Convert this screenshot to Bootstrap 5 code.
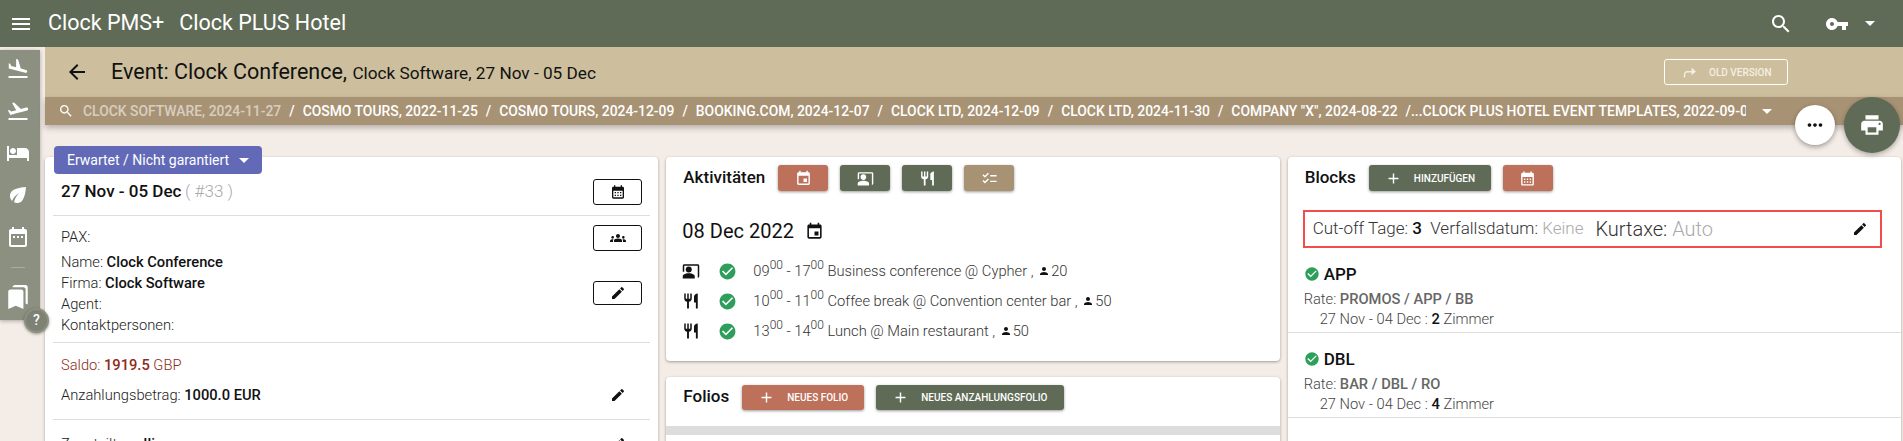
<!DOCTYPE html>
<html lang="de">
<head>
  <meta charset="UTF-8">
  <meta name="viewport" content="width=device-width, initial-scale=1">
  <title>Event: Clock Conference</title>
  <link href="https://cdn.jsdelivr.net/npm/bootstrap@5.3.3/dist/css/bootstrap.min.css" rel="stylesheet">
  <style>
    html, body { height: 441px; overflow: hidden; }
    body { background: #f4ece6; font-family: Roboto, "Liberation Sans", sans-serif; font-size: 14.7px; font-weight: 300; color: #212121; }
    svg.ic { width: 1em; height: 1em; fill: currentColor; flex: none; }
    .ic-24 { font-size: 24px; }
    .ic-16 { font-size: 16px; }
    .topbar { height: 47px; background: #5f6b57; color: #fff; font-size: 21.5px; font-weight: 400; padding: 0 28px 0 9px; }
    .topbar .brand-a { margin-left: 15px; }
    .topbar .brand-b { margin-left: 15px; }
    .top-tools { gap: 32px; }
    .side-wrap { width: 45px; flex: none; }
    .side-bar { width: 40px; height: 270px; margin-top: 3px; background: #8b9080; color: #fff; font-size: 24px; padding: 7px 5px 0 0; gap: 18px; box-shadow: 0 1px 4px rgba(0,0,0,.3); }
    .side-rule { width: 14px; height: 1px; background: #a9ad9f; margin-bottom: -2px; }
    .side-marks { font-size: 26px !important; }
    .help-dot { position: absolute; left: 24px; top: 308px; width: 25px; height: 25px; border-radius: 50%; background: #7d8274; color: #fff; font-size: 14px; font-weight: 500; box-shadow: 0 1px 3px rgba(0,0,0,.4); border: 2px solid #8b9080; }
    .title-bar { height: 50px; background: #cdbf9d; color: #111; padding: 0 115px 0 20px; }
    .title-bar h1 { font-size: 21.5px; font-weight: 400; margin: 0 0 0 22px; }
    .title-bar h1 span { font-size: 17.2px; }
    .btn-old { width: 124px; height: 26px; padding: 0 0 0 16px; border: 1px solid #fff; border-radius: 3px; background: transparent; color: #f4efe3; font-size: 10px; font-weight: 500; }
    .btn-old svg { font-size: 17px; margin-right: 11px; }
    .crumbs { height: 28px; background: #a89274; color: #fff; font-size: 13.9px; font-weight: 500; padding: 0 131px 0 13px; box-shadow: 0 3px 6px rgba(0,0,0,.25); white-space: nowrap; position: relative; }
    .crumbs .crumb-list { flex: 1; overflow: hidden; margin-left: 9px; }
    .crumbs .dim { opacity: .55; }
    .crumbs .sep { margin: 0 8px; }
    .crumbs .sep.tight { margin-right: 0; }
    .caret-d { width: 0; height: 0; border-left: 5px solid transparent; border-right: 5px solid transparent; border-top: 5px solid currentColor; display: inline-block; flex: none; }
    .fab-more { position: absolute; left: 1795px; top: 105px; width: 40px; height: 40px; border-radius: 50%; background: #fff; color: #111; font-size: 22px; box-shadow: 0 2px 5px rgba(0,0,0,.35); z-index: 5; }
    .fab-print { position: absolute; left: 1844px; top: 97px; width: 56px; height: 56px; border-radius: 50%; background: #5f6b57; color: #fff; font-size: 26px; box-shadow: 0 2px 5px rgba(0,0,0,.3); z-index: 5; }
    .cols { margin-top: 32px; padding-right: 2px; }
    .panel { display: flow-root; background: #fff; border: 0; border-radius: 4px; box-shadow: 0 1px 3px rgba(0,0,0,.35); }
    .btn-status { display: flex; align-items: center; width: 208px; height: 28px; margin: -11px 0 0 9px; padding: 0 0 0 13px; border: 0; border-radius: 4px; background: #626ab8; color: #fff; font-size: 14px; font-weight: 400; position: relative; }
    .btn-status .caret-d { margin-left: 10px; }
    .sect { margin: 0 8px; padding: 0 8px; border-bottom: 1px solid #ddd; }
    .sect-date { height: 42px; padding-top: 5px; }
    .sect-date b { font-size: 17px; font-weight: 500; color: #111; }
    .sect-date i { font-style: normal; font-size: 17px; color: #aaa; }
    .sect-info { height: 127px; padding-top: 9px; }
    .sect-info p { margin: 0; line-height: 21px; }
    .sect-info p:first-child { line-height: 24px; margin-bottom: 3px; }
    .sect-pay { height: 77px; padding-top: 7px; }
    .sect-pay > div { height: 30px; }
    .sect-last { padding-top: 13px; }
    .strong-t { font-weight: 500; color: #111; }
    .saldo { color: #8e2a20; }
    .saldo b { font-weight: 500; }
    .btn-line { width: 49px; height: 26px; padding: 0; border: 1px solid #111; border-radius: 3px; color: #111; font-size: 16px; background: #fff; }
    .btn-line.edit { height: 24px; margin-top: 30px; }
    .edit-ic { font-size: 16px; color: #111; margin-right: 16px; }
    .panel-head { padding: 8px 17px 0; height: 34px; }
    .panel-head h2 { font-size: 17px; font-weight: 500; margin: 0 13px 2px 0; color: #111; }
    .btn-act { height: 26px; padding: 0; border: 0; border-radius: 3px; color: #fff; box-shadow: 0 1px 3px rgba(0,0,0,.4); font-size: 10px; font-weight: 500; }
    .btn-act svg { font-size: 17px; }
    .btn-act.ico { width: 50px; }
    .btn-act .lead-ic { margin: 0 12px 0 16px; }
    .act-btns { gap: 12px; }
    .tone-red { background: #bd705a; }
    .tone-green { background: #5f6b57; }
    .tone-tan { background: #a89274; }
    .date-head { font-size: 20px; font-weight: 400; color: #111; margin: 25px 0 0 16px; line-height: 30px; }
    .date-head svg { font-size: 19px; margin-left: 11px; }
    .act-list { margin: 10px 16px 0; padding-bottom: 15px; }
    .act-row { height: 30px; color: #333; }
    .act-row .kind { font-size: 18px; color: #111; width: 36px; }
    .act-row .ok { font-size: 19px; color: #2e9e5b; width: 35px; }
    .act-row sup { font-size: 12px; top: -.55em; }
    .pers { font-size: 12px; color: #111; margin: 0 1px 0 1px; vertical-align: -1px; }
    .folios { margin-top: 16px; height: 80px; }
    .folio-head { padding: 8px 17px 0; height: 49px; }
    .folio-head h2 { font-size: 17px; font-weight: 500; margin: 0 13px 0 0; color: #111; line-height: 22px; }
    .btn-wide { height: 25px; padding: 0; }
    .folio-band { height: 9px; background: #ddd; }
    .cutoff { margin: 19px 19px 0 15px; height: 38px; padding: 0 12px 0 8px; border: 2px solid #f44b4b; color: #333; font-size: 17px; }
    .cutoff .big { font-size: 20px; margin-left: 12px; }
    .muted-t { color: #aaa; }
    .block-item { height: 85px; padding: 15px 16px 0; border-bottom: 1px solid #ddd; }
    .block-item h3 { font-size: 17px; font-weight: 500; margin: 0; line-height: 22px; color: #111; }
    .block-item h3 svg { font-size: 16px; color: #2e9e5b; margin-right: 4px; vertical-align: -2px; }
    .block-item p { margin: 0; line-height: 20px; color: #444; }
    .block-item p.rate { margin-top: 4px; }
    .block-item p.rate b { font-weight: 500; color: #666; }
    .block-item p.span-l { padding-left: 16px; }
    .block-item p.span-l b { font-weight: 500; color: #111; }
    .block-tail { height: 40px; }
  </style>
</head>
<body>
  <svg width="0" height="0" class="position-absolute">
    <symbol id="i-menu" viewBox="0 0 24 24"><path d="M3 18h18v-2H3v2zm0-5h18v-2H3v2zm0-7v2h18V6H3z"/></symbol>
    <symbol id="i-search" viewBox="0 0 24 24"><path d="M15.5 14h-.79l-.28-.27C15.41 12.59 16 11.11 16 9.5 16 5.91 13.09 3 9.5 3S3 5.91 3 9.5 5.91 16 9.5 16c1.61 0 3.09-.59 4.23-1.57l.27.28v.79l5 4.99L20.49 19l-4.99-5zm-6 0C7.01 14 5 11.99 5 9.5S7.01 5 9.5 5 14 7.01 14 9.5 11.99 14 9.5 14z"/></symbol>
    <symbol id="i-key" viewBox="0 0 24 24"><path d="M12.65 10C11.83 7.67 9.61 6 7 6c-3.31 0-6 2.69-6 6s2.69 6 6 6c2.61 0 4.83-1.67 5.65-4H17v4h4v-4h2v-4H12.65zM7 14c-1.1 0-2-.9-2-2s.9-2 2-2 2 .9 2 2-.9 2-2 2z"/></symbol>
    <symbol id="i-back" viewBox="0 0 24 24"><path d="M20 11H7.83l5.59-5.59L12 4l-8 8 8 8 1.41-1.41L7.83 13H20v-2z"/></symbol>
    <symbol id="i-land" viewBox="0 0 24 24"><path d="M2.5 19h19v2h-19zm16.84-3.15c.8.21 1.62-.26 1.84-1.06.21-.8-.26-1.62-1.06-1.84l-5.31-1.42-2.76-9.02L10.12 2v8.28L5.15 8.95l-.93-2.32-1.45-.39v5.17l16.57 4.44z"/></symbol>
    <symbol id="i-takeoff" viewBox="0 0 24 24"><path d="M2.5 19h19v2h-19zm19.57-9.36c-.21-.8-1.04-1.28-1.84-1.06L14.92 10l-6.9-6.43-1.93.51 4.14 7.17-4.97 1.33-1.97-1.54-1.45.39 1.82 3.16.77 1.33 1.6-.43 5.31-1.42 4.35-1.16L21 11.49c.81-.23 1.28-1.05 1.07-1.85z"/></symbol>
    <symbol id="i-hotel" viewBox="0 0 24 24"><path d="M7 13c1.66 0 3-1.34 3-3S8.66 7 7 7s-3 1.34-3 3 1.34 3 3 3zm12-6h-8v7H3V5H1v15h2v-3h18v3h2v-9c0-2.21-1.79-4-4-4z"/></symbol>
    <symbol id="i-leaf" viewBox="0 0 24 24"><path d="M6.05 8.05c-2.73 2.73-2.73 7.15-.02 9.88 1.47-3.4 4.09-6.24 7.36-7.93-2.77 2.34-4.71 5.61-5.39 9.32 2.6 1.23 5.8.78 7.95-1.37C19.43 14.47 20 4 20 4S9.53 4.57 6.05 8.05z"/></symbol>
    <symbol id="i-range" viewBox="0 0 24 24"><path d="M9 11H7v2h2v-2zm4 0h-2v2h2v-2zm4 0h-2v2h2v-2zm2-7h-1V2h-2v2H8V2H6v2H5c-1.11 0-1.99.9-1.99 2L3 20c0 1.1.89 2 2 2h14c1.1 0 2-.9 2-2V6c0-1.1-.9-2-2-2zm0 16H5V9h14v11z"/></symbol>
    <symbol id="i-marks" viewBox="0 0 24 24"><path d="M19 18l2 1V3c0-1.1-.9-2-2-2H8.99C7.89 1 7 1.9 7 3h10c1.1 0 2 .9 2 2v13zM15 5H5c-1.1 0-2 .9-2 2v16l7-3 7 3V7c0-1.1-.9-2-2-2z"/></symbol>
    <symbol id="i-more" viewBox="0 0 24 24"><path d="M6 10c-1.1 0-2 .9-2 2s.9 2 2 2 2-.9 2-2-.9-2-2-2zm12 0c-1.1 0-2 .9-2 2s.9 2 2 2 2-.9 2-2-.9-2-2-2zm-6 0c-1.1 0-2 .9-2 2s.9 2 2 2 2-.9 2-2-.9-2-2-2z"/></symbol>
    <symbol id="i-print" viewBox="0 0 24 24"><path d="M19 8H5c-1.66 0-3 1.34-3 3v6h4v4h12v-4h4v-6c0-1.66-1.34-3-3-3zm-3 11H8v-5h8v5zm3-7c-.55 0-1-.45-1-1s.45-1 1-1 1 .45 1 1-.45 1-1 1zm-1-9H6v4h12V3z"/></symbol>
    <symbol id="i-fwd" viewBox="0 0 24 24"><path d="M15 5l6 5.5-6 5.5v-4H9c-1.7 0-3 1.3-3 3v4H4v-4c0-2.8 2.2-5 5-5h6V5z"/></symbol>
    <symbol id="i-edit" viewBox="0 0 24 24"><path d="M3 17.25V21h3.75L17.81 9.94l-3.75-3.75L3 17.25zM20.71 7.04c.39-.39.39-1.02 0-1.41l-2.34-2.34c-.39-.39-1.02-.39-1.41 0l-1.83 1.83 3.75 3.75 1.83-1.83z"/></symbol>
    <symbol id="i-groups" viewBox="0 0 24 24"><path d="M12 12.75c1.63 0 3.07.39 4.24.9 1.08.48 1.76 1.56 1.76 2.73V18H6v-1.61c0-1.18.68-2.26 1.76-2.73 1.17-.52 2.61-.91 4.24-.91zM4 13c1.1 0 2-.9 2-2s-.9-2-2-2-2 .9-2 2 .9 2 2 2zm1.13 1.1c-.37-.06-.74-.1-1.13-.1-.99 0-1.93.21-2.78.58C.48 14.9 0 15.62 0 16.43V18h4.5v-1.61c0-.83.23-1.61.63-2.29zM20 13c1.1 0 2-.9 2-2s-.9-2-2-2-2 .9-2 2 .9 2 2 2zm4 3.43c0-.81-.48-1.53-1.22-1.85-.85-.37-1.79-.58-2.78-.58-.39 0-.76.04-1.13.1.4.68.63 1.46.63 2.29V18H24v-1.57zM12 6c1.66 0 3 1.34 3 3s-1.34 3-3 3-3-1.34-3-3 1.34-3 3-3z"/></symbol>
    <symbol id="i-event" viewBox="0 0 24 24"><path d="M17 12h-5v5h5v-5zM16 1v2H8V1H6v2H5c-1.11 0-1.99.9-1.99 2L3 19c0 1.1.89 2 2 2h14c1.1 0 2-.9 2-2V5c0-1.1-.9-2-2-2h-1V1h-2zm3 18H5V8h14v11z"/></symbol>
    <symbol id="i-food" viewBox="0 0 24 24"><path d="M11 9H9V2H7v7H5V2H3v7c0 2.12 1.66 3.84 3.75 3.97V22h2.5v-9.03C11.34 12.84 13 11.12 13 9V2h-2v7zm5-3v8h2.5v8H21V2c-2.76 0-5 2.24-5 4z"/></symbol>
    <symbol id="i-present" viewBox="0 0 24 24"><path d="M21 3H3C1.9 3 1 3.9 1 5v8h2V5h18v16c1.1 0 2-.9 2-2V5c0-1.1-.9-2-2-2z"/><circle cx="9" cy="10" r="4"/><path d="M15.39 16.56C13.71 15.7 11.53 15 9 15c-2.53 0-4.71.7-6.39 1.56C1.61 17.07 1 18.1 1 19.22V22h16v-2.78c0-1.12-.61-2.15-1.61-2.66z"/></symbol>
    <symbol id="i-check" viewBox="0 0 24 24"><path d="M22 7h-9v2h9V7zm0 8h-9v2h9v-2zM5.54 11 2 7.46l1.41-1.41 2.12 2.12 4.24-4.24 1.41 1.41L5.54 11zm0 8L2 15.46l1.41-1.41 2.12 2.12 4.24-4.24 1.41 1.41L5.54 19z"/></symbol>
    <symbol id="i-ok" viewBox="0 0 24 24"><path d="M12 2C6.48 2 2 6.48 2 12s4.48 10 10 10 10-4.48 10-10S17.52 2 12 2zm-2 15l-5-5 1.41-1.41L10 14.17l7.59-7.59L19 8l-9 9z"/></symbol>
    <symbol id="i-person" viewBox="0 0 24 24"><path d="M12 12c2.21 0 4-1.79 4-4s-1.79-4-4-4-4 1.79-4 4 1.79 4 4 4zm0 2c-2.67 0-8 1.34-8 4v2h16v-2c0-2.66-5.33-4-8-4z"/></symbol>
    <symbol id="i-month" viewBox="0 0 24 24"><path d="M19 4h-1V2h-2v2H8V2H6v2H5c-1.11 0-2 .9-2 2v14c0 1.1.89 2 2 2h14c1.1 0 2-.9 2-2V6c0-1.1-.9-2-2-2zm0 16H5V10h14v10zM9 14H7v-2h2v2zm4 0h-2v-2h2v2zm4 0h-2v-2h2v2zm-8 4H7v-2h2v2zm4 0h-2v-2h2v2zm4 0h-2v-2h2v2z"/></symbol>
    <symbol id="i-plus" viewBox="0 0 24 24"><path d="M19 13h-6v6h-2v-6H5v-2h6V5h2v6h6v2z"/></symbol>
  </svg>

  <header class="topbar d-flex align-items-center">
    <svg class="ic ic-24"><use href="#i-menu"/></svg>
    <span class="brand-a">Clock PMS+</span>
    <span class="brand-b">Clock PLUS Hotel</span>
    <div class="ms-auto d-flex align-items-center top-tools">
      <svg class="ic ic-24"><use href="#i-search"/></svg>
      <div class="d-flex align-items-center gap-3">
        <svg class="ic ic-24"><use href="#i-key"/></svg>
        <span class="caret-d"></span>
      </div>
    </div>
  </header>

  <div class="d-flex">
    <nav class="side-wrap">
      <div class="side-bar d-flex flex-column align-items-center">
        <svg class="ic"><use href="#i-land"/></svg>
        <svg class="ic"><use href="#i-takeoff"/></svg>
        <svg class="ic"><use href="#i-hotel"/></svg>
        <svg class="ic"><use href="#i-leaf"/></svg>
        <svg class="ic"><use href="#i-range"/></svg>
        <div class="side-rule"></div>
        <svg class="ic side-marks"><use href="#i-marks"/></svg>
      </div>
    </nav>

    <main class="flex-grow-1" style="min-width:0">
      <div class="title-bar d-flex align-items-center justify-content-between">
        <div class="d-flex align-items-center">
          <svg class="ic ic-24"><use href="#i-back"/></svg>
          <h1>Event: Clock Conference, <span>Clock Software, 27 Nov - 05 Dec</span></h1>
        </div>
        <button class="btn btn-old d-flex align-items-center"><svg class="ic"><use href="#i-fwd"/></svg>OLD VERSION</button>
      </div>

      <div class="crumbs d-flex align-items-center">
        <svg class="ic ic-16"><use href="#i-search"/></svg>
        <div class="crumb-list"><span class="dim">CLOCK SOFTWARE, 2024-11-27</span><span class="sep">/</span>COSMO TOURS, 2022-11-25<span class="sep">/</span>COSMO TOURS, 2024-12-09<span class="sep">/</span>BOOKING.COM, 2024-12-07<span class="sep">/</span>CLOCK LTD, 2024-12-09<span class="sep">/</span>CLOCK LTD, 2024-11-30<span class="sep">/</span>COMPANY "X", 2024-08-22<span class="sep tight">/</span>...CLOCK PLUS HOTEL EVENT TEMPLATES, 2022-09-01</div>
        <span class="caret-d ms-3"></span>
      </div>

      <div class="row gx-2 cols">
        <div class="col-4">
          <div class="panel">
            <button class="btn-status">Erwartet / Nicht garantiert <span class="caret-d"></span></button>
            <div class="sect sect-date d-flex justify-content-between align-items-start">
              <div><b>27 Nov - 05 Dec</b> <i>( #33 )</i></div>
              <button class="btn btn-line d-flex align-items-center justify-content-center"><svg class="ic"><use href="#i-month"/></svg></button>
            </div>
            <div class="sect sect-info d-flex justify-content-between">
              <div>
                <p>PAX:</p>
                <p>Name: <span class="strong-t">Clock Conference</span></p>
                <p>Firma: <span class="strong-t">Clock Software</span></p>
                <p>Agent:</p>
                <p>Kontaktpersonen:</p>
              </div>
              <div>
                <button class="btn btn-line d-flex align-items-center justify-content-center"><svg class="ic"><use href="#i-groups"/></svg></button>
                <button class="btn btn-line edit d-flex align-items-center justify-content-center"><svg class="ic"><use href="#i-edit"/></svg></button>
              </div>
            </div>
            <div class="sect sect-pay">
              <div class="saldo d-flex align-items-center"><span>Saldo: <b>1919.5</b> GBP</span></div>
              <div class="d-flex align-items-center justify-content-between"><span>Anzahlungsbetrag: <span class="strong-t">1000.0 EUR</span></span><svg class="ic edit-ic"><use href="#i-edit"/></svg></div>
            </div>
            <div class="sect sect-last border-0 d-flex align-items-center justify-content-between"><span>Zugeteilt an: <span class="strong-t">Ilios</span></span><svg class="ic edit-ic"><use href="#i-edit"/></svg></div>
          </div>
        </div>

        <div class="col-4">
          <div class="panel">
            <div class="panel-head d-flex align-items-center">
              <h2>Aktivitäten</h2>
              <div class="d-flex act-btns">
                <button class="btn btn-act ico tone-red d-flex align-items-center justify-content-center"><svg class="ic"><use href="#i-event"/></svg></button>
                <button class="btn btn-act ico tone-green d-flex align-items-center justify-content-center"><svg class="ic"><use href="#i-present"/></svg></button>
                <button class="btn btn-act ico tone-green d-flex align-items-center justify-content-center"><svg class="ic"><use href="#i-food"/></svg></button>
                <button class="btn btn-act ico tone-tan d-flex align-items-center justify-content-center"><svg class="ic"><use href="#i-check"/></svg></button>
              </div>
            </div>
            <div class="date-head d-flex align-items-center">08 Dec 2022 <svg class="ic"><use href="#i-event"/></svg></div>
            <div class="act-list">
              <div class="act-row d-flex align-items-center"><span class="kind d-flex"><svg class="ic"><use href="#i-present"/></svg></span><span class="ok d-flex"><svg class="ic"><use href="#i-ok"/></svg></span><span>09<sup>00</sup> - 17<sup>00</sup> Business conference @ Cypher , <svg class="ic pers"><use href="#i-person"/></svg>20</span></div>
              <div class="act-row d-flex align-items-center"><span class="kind d-flex"><svg class="ic"><use href="#i-food"/></svg></span><span class="ok d-flex"><svg class="ic"><use href="#i-ok"/></svg></span><span>10<sup>00</sup> - 11<sup>00</sup> Coffee break @ Convention center bar , <svg class="ic pers"><use href="#i-person"/></svg>50</span></div>
              <div class="act-row d-flex align-items-center"><span class="kind d-flex"><svg class="ic"><use href="#i-food"/></svg></span><span class="ok d-flex"><svg class="ic"><use href="#i-ok"/></svg></span><span>13<sup>00</sup> - 14<sup>00</sup> Lunch @ Main restaurant , <svg class="ic pers"><use href="#i-person"/></svg>50</span></div>
            </div>
          </div>
          <div class="panel folios">
            <div class="folio-head d-flex align-items-start">
              <h2>Folios</h2>
              <div class="d-flex act-btns">
                <button class="btn btn-act btn-wide tone-red d-flex align-items-center" style="width:122px"><svg class="ic lead-ic"><use href="#i-plus"/></svg>NEUES FOLIO</button>
                <button class="btn btn-act btn-wide tone-green d-flex align-items-center" style="width:188px"><svg class="ic lead-ic"><use href="#i-plus"/></svg>NEUES ANZAHLUNGSFOLIO</button>
              </div>
            </div>
            <div class="folio-band"></div>
          </div>
        </div>

        <div class="col-4">
          <div class="panel">
            <div class="panel-head d-flex align-items-center">
              <h2>Blocks</h2>
              <div class="d-flex act-btns">
                <button class="btn btn-act tone-green d-flex align-items-center" style="width:122px"><svg class="ic lead-ic"><use href="#i-plus"/></svg>HINZUFÜGEN</button>
                <button class="btn btn-act ico tone-red d-flex align-items-center justify-content-center"><svg class="ic"><use href="#i-month"/></svg></button>
              </div>
            </div>
            <div class="cutoff d-flex align-items-center">
              <span>Cut-off Tage: <span class="strong-t">3</span> &nbsp;Verfallsdatum: <span class="muted-t">Keine</span></span>
              <span class="big">Kurtaxe: <span class="muted-t">Auto</span></span>
              <svg class="ic ic-16 ms-auto" style="color:#111"><use href="#i-edit"/></svg>
            </div>
            <div class="block-item">
              <h3><svg class="ic"><use href="#i-ok"/></svg>APP</h3>
              <p class="rate">Rate: <b>PROMOS / APP / BB</b></p>
              <p class="span-l">27 Nov - 04 Dec : <b>2</b> Zimmer</p>
            </div>
            <div class="block-item">
              <h3><svg class="ic"><use href="#i-ok"/></svg>DBL</h3>
              <p class="rate">Rate: <b>BAR / DBL / RO</b></p>
              <p class="span-l">27 Nov - 04 Dec : <b>4</b> Zimmer</p>
            </div>
            <div class="block-tail"></div>
          </div>
        </div>
      </div>
    </main>
  </div>

  <div class="help-dot d-flex align-items-center justify-content-center">?</div>
  <button class="btn fab-more d-flex align-items-center justify-content-center p-0"><svg class="ic"><use href="#i-more"/></svg></button>
  <button class="btn fab-print d-flex align-items-center justify-content-center p-0"><svg class="ic"><use href="#i-print"/></svg></button>

  <script src="https://cdn.jsdelivr.net/npm/bootstrap@5.3.3/dist/js/bootstrap.bundle.min.js"></script>
</body>
</html>
